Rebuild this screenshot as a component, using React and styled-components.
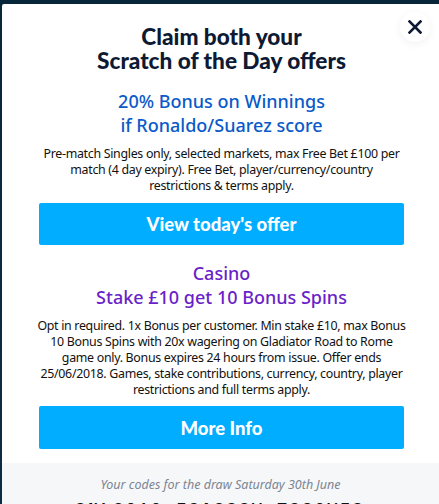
import styled, { createGlobalStyle } from "styled-components";

const GlobalStyle = createGlobalStyle`
  html, body {
    margin: 0;
    padding: 0;
    background: #0b2a3f;
    overflow: hidden;
  }
  body {
    font-family: "Open Sans", "Noto Sans", sans-serif;
  }
`;

const Backdrop = styled.div`
  width: 439px;
  height: 504px;
  padding: 4px 0 0 2px;
  box-sizing: border-box;
  background: linear-gradient(180deg, #07263a, #0b2d44);
  overflow: hidden;
`;

const Modal = styled.section`
  position: relative;
  background: #ffffff;
  border-top-left-radius: 2px;
  height: 100%;
  overflow: hidden;
`;

const CloseButton = styled.button`
  position: absolute;
  top: 8px;
  right: 9px;
  width: 30px;
  height: 30px;
  border: none;
  border-radius: 50%;
  background: #ffffff;
  box-shadow: 0 2px 8px rgba(0, 0, 0, 0.06);
  display: flex;
  align-items: center;
  justify-content: center;
  padding: 0;
  cursor: pointer;
`;

const Content = styled.div`
  display: flex;
  flex-direction: column;
  align-items: center;
  padding: 21px 33px 14px 35px;
  text-align: center;
`;

const Title = styled.h1`
  margin: 0;
  font-family: "Lato", "Noto Sans", sans-serif;
  font-weight: 900;
  font-size: 22.6px;
  line-height: 24px;
  color: #0e1a33;
`;

const OfferTitle = styled.h2`
  margin: ${(p) => p.$top}px 0 0;
  font-family: "Noto Sans", sans-serif;
  font-weight: 500;
  font-size: 18px;
  line-height: 24px;
  color: ${(p) => p.$color};
`;

const Terms = styled.p`
  margin: ${(p) => p.$top}px 0 0;
  font-family: "Noto Sans", sans-serif;
  font-size: 12.4px;
  line-height: 16px;
  color: #111111;
  letter-spacing: -0.3px;
`;

const CtaButton = styled.button`
  width: 365px;
  height: ${(p) => p.$height}px;
  margin-top: ${(p) => p.$top}px;
  border: none;
  border-radius: 2px;
  background: #00adff;
  color: #ffffff;
  font-family: "Lato", "Noto Sans", sans-serif;
  font-weight: 900;
  font-size: 18.5px;
  cursor: pointer;
`;

const CodesFooter = styled.footer`
  background: #f6f7f9;
  padding: 13px 0 0;
  display: flex;
  flex-direction: column;
  align-items: center;
`;

const CodesCaption = styled.p`
  margin: 0;
  font-family: "Noto Sans", sans-serif;
  font-style: italic;
  font-size: 12.5px;
  line-height: 17px;
  color: #7c8593;
`;

const Codes = styled.p`
  margin: 7px 0 0;
  font-family: "Liberation Mono", monospace;
  font-weight: 700;
  font-size: 16px;
  line-height: 20px;
  letter-spacing: 3px;
  color: #111111;
  white-space: nowrap;
`;

export default function App() {
  return (
    <>
      <GlobalStyle />
      <Backdrop>
        <Modal>
          <CloseButton aria-label="Close">
            <svg width="14" height="14" viewBox="0 0 14 14">
              <path
                d="M1.5 1.5 L12.5 12.5 M12.5 1.5 L1.5 12.5"
                stroke="#0e1a33"
                strokeWidth="2.6"
                strokeLinecap="square"
              />
            </svg>
          </CloseButton>
          <Content>
            <Title>
              Claim both your
              <br />
              Scratch of the Day offers
            </Title>
            <OfferTitle $top={16} $color="#0a5ac9">
              20% Bonus on Winnings
              <br />
              if Ronaldo/Suarez score
            </OfferTitle>
            <Terms $top={9}>
              Pre-match Singles only, selected markets, max Free Bet £100 per
              <br />
              match (4 day expiry). Free Bet, player/currency/country
              <br />
              restrictions &amp; terms apply.
            </Terms>
            <CtaButton $top={9} $height={42}>
              View today's offer
            </CtaButton>
            <OfferTitle $top={16} $color="#6a1fc8">
              Casino
              <br />
              Stake £10 get 10 Bonus Spins
            </OfferTitle>
            <Terms $top={9}>
              Opt in required. 1x Bonus per customer. Min stake £10, max Bonus
              <br />
              10 Bonus Spins with 20x wagering on Gladiator Road to Rome
              <br />
              game only. Bonus expires 24 hours from issue. Offer ends
              <br />
              25/06/2018. Games, stake contributions, currency, country, player
              <br />
              restrictions and full terms apply.
            </Terms>
            <CtaButton $top={8} $height={43}>
              More Info
            </CtaButton>
          </Content>
          <CodesFooter>
            <CodesCaption>Your codes for the draw Saturday 30th June</CodesCaption>
            <Codes>SNL2019 FSA8SSW TSS9WZS</Codes>
          </CodesFooter>
        </Modal>
      </Backdrop>
    </>
  );
}
